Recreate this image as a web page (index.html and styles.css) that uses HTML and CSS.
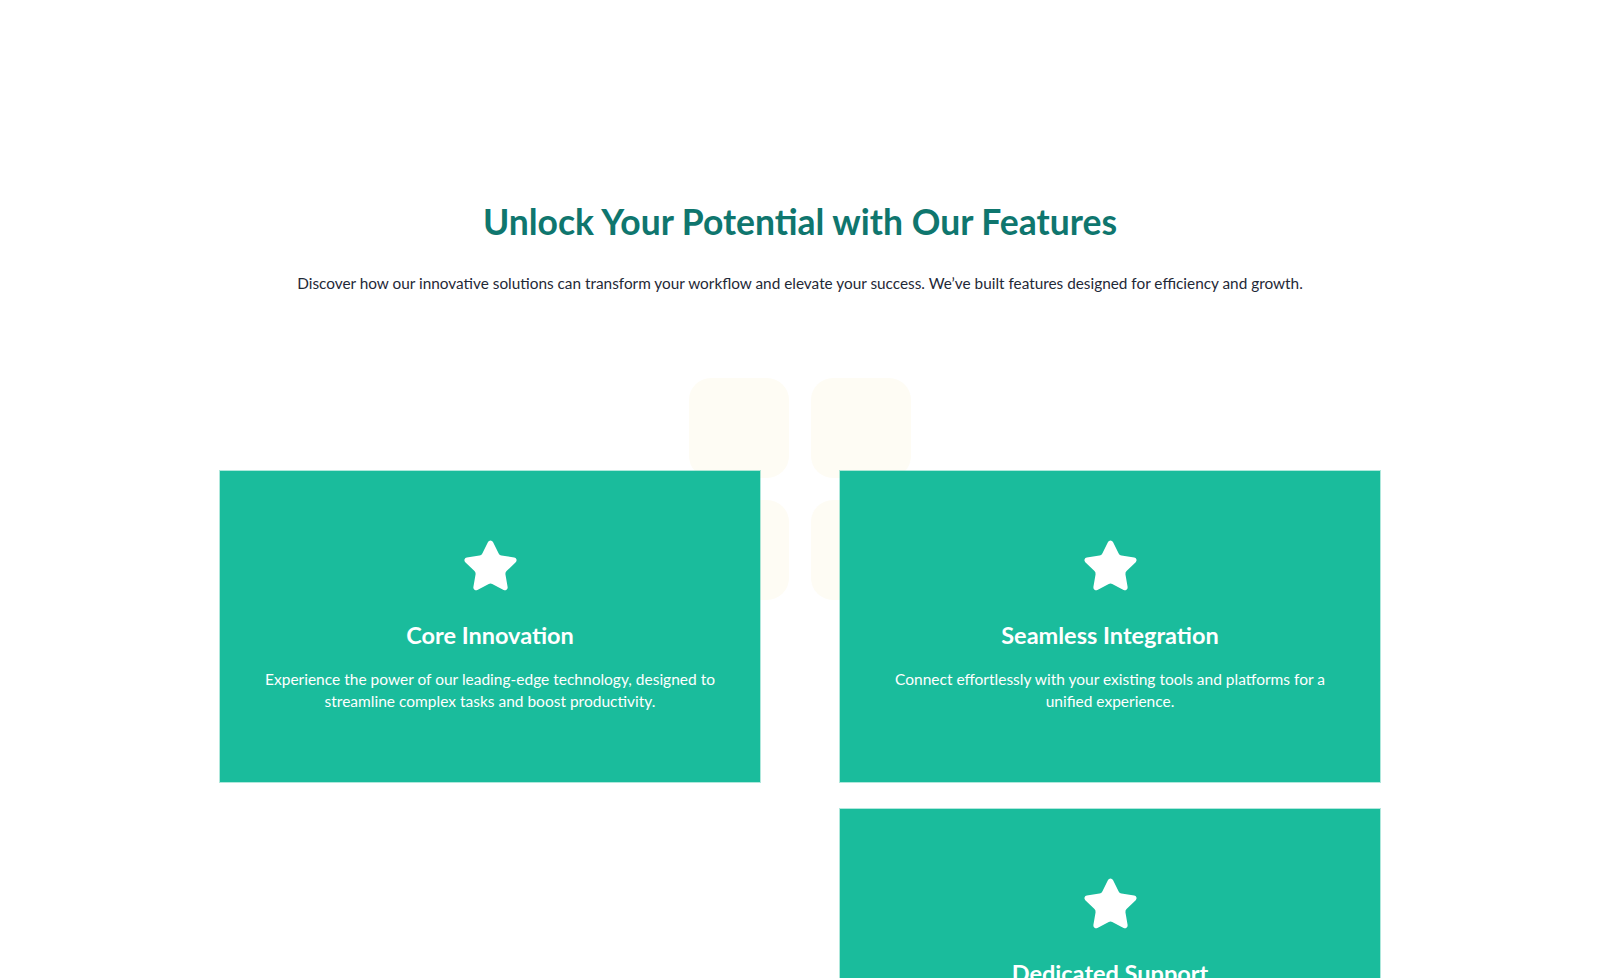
FILE: index.html
```html
<!DOCTYPE html>
<html lang="en">
<head>
<meta charset="utf-8">
<title>Features</title>
<link rel="stylesheet" href="styles.css">
</head>
<body>
<section class="features">
  <h1 class="title">Unlock Your Potential with Our Features</h1>
  <p class="subtitle">Discover how our innovative solutions can transform your workflow and elevate your success. We’ve built features designed for efficiency and growth.</p>
  <div class="stage">
    <div class="deco">
      <span></span><span></span><span></span><span></span>
    </div>
    <div class="grid">
      <article class="card">
        <svg class="star" viewBox="0 0 24 24"><path d="M11.525 2.295a.53.53 0 0 1 .95 0l2.31 4.679a2.123 2.123 0 0 0 1.595 1.16l5.166.756a.53.53 0 0 1 .294.904l-3.736 3.638a2.123 2.123 0 0 0-.611 1.878l.882 5.14a.53.53 0 0 1-.771.56l-4.618-2.428a2.122 2.122 0 0 0-1.973 0L6.396 21.01a.53.53 0 0 1-.77-.56l.881-5.139a2.122 2.122 0 0 0-.611-1.879L2.16 9.795a.53.53 0 0 1 .294-.906l5.165-.755a2.122 2.122 0 0 0 1.597-1.160z"/></svg>
        <h2 class="card-title">Core Innovation</h2>
        <p class="card-text">Experience the power of our leading-edge technology, designed to streamline complex tasks and boost productivity.</p>
      </article>
      <article class="card">
        <svg class="star" viewBox="0 0 24 24"><path d="M11.525 2.295a.53.53 0 0 1 .95 0l2.31 4.679a2.123 2.123 0 0 0 1.595 1.16l5.166.756a.53.53 0 0 1 .294.904l-3.736 3.638a2.123 2.123 0 0 0-.611 1.878l.882 5.14a.53.53 0 0 1-.771.56l-4.618-2.428a2.122 2.122 0 0 0-1.973 0L6.396 21.01a.53.53 0 0 1-.77-.56l.881-5.139a2.122 2.122 0 0 0-.611-1.879L2.16 9.795a.53.53 0 0 1 .294-.906l5.165-.755a2.122 2.122 0 0 0 1.597-1.160z"/></svg>
        <h2 class="card-title">Seamless Integration</h2>
        <p class="card-text">Connect effortlessly with your existing tools and platforms for a unified experience.</p>
      </article>
      <article class="card card-right">
        <svg class="star" viewBox="0 0 24 24"><path d="M11.525 2.295a.53.53 0 0 1 .95 0l2.31 4.679a2.123 2.123 0 0 0 1.595 1.16l5.166.756a.53.53 0 0 1 .294.904l-3.736 3.638a2.123 2.123 0 0 0-.611 1.878l.882 5.14a.53.53 0 0 1-.771.56l-4.618-2.428a2.122 2.122 0 0 0-1.973 0L6.396 21.01a.53.53 0 0 1-.77-.56l.881-5.139a2.122 2.122 0 0 0-.611-1.879L2.16 9.795a.53.53 0 0 1 .294-.906l5.165-.755a2.122 2.122 0 0 0 1.597-1.160z"/></svg>
        <h2 class="card-title">Dedicated Support</h2>
        <p class="card-text">Our expert team is always ready to help you get the most out of every feature, whenever you need it.</p>
      </article>
    </div>
  </div>
</section>
</body>
</html>
```

FILE: styles.css
```css
html, body {
  margin: 0;
  padding: 0;
  background: #ffffff;
}
body {
  font-family: "Lato", "Noto Sans", sans-serif;
  color: #1f2937;
}
.features {
  padding-top: 200px;
  text-align: center;
}
.title {
  margin: 0;
  font-size: 35.5px;
  line-height: 43px;
  font-weight: 700;
  color: #0f766e;
}
.subtitle {
  margin: 28px 0 0;
  font-size: 15.35px;
  line-height: 24px;
  color: #1f2937;
}
.stage {
  position: relative;
  width: 1160px;
  margin: 83px auto 0;
}
.deco {
  position: absolute;
  top: 0;
  left: 50%;
  transform: translateX(-50%);
  display: grid;
  grid-template-columns: 100px 100px;
  grid-auto-rows: 100px;
  gap: 22px;
}
.deco span {
  background: #fefcf4;
  border-radius: 22px;
}
.grid {
  position: relative;
  padding-top: 93px;
  display: grid;
  grid-template-columns: 540px 540px;
  column-gap: 80px;
  row-gap: 27px;
}
.card {
  background: #1abc9c;
  height: 311px;
  box-sizing: border-box;
  padding: 66px 40px 0;
  box-shadow: 0 0 0 1px rgba(26, 188, 156, 0.35);
  color: #ffffff;
}
.card-right {
  grid-column: 2;
}
.star {
  display: block;
  width: 59px;
  height: 59px;
  margin: 0 auto;
  fill: #ffffff;
  stroke: #ffffff;
  stroke-width: 1.2;
  stroke-linejoin: round;
}
.card-title {
  margin: 24px 0 0;
  font-size: 23.5px;
  line-height: 30px;
  font-weight: 700;
}
.card-text {
  margin: 18px 0 0;
  font-size: 15.5px;
  line-height: 22px;
}
```
